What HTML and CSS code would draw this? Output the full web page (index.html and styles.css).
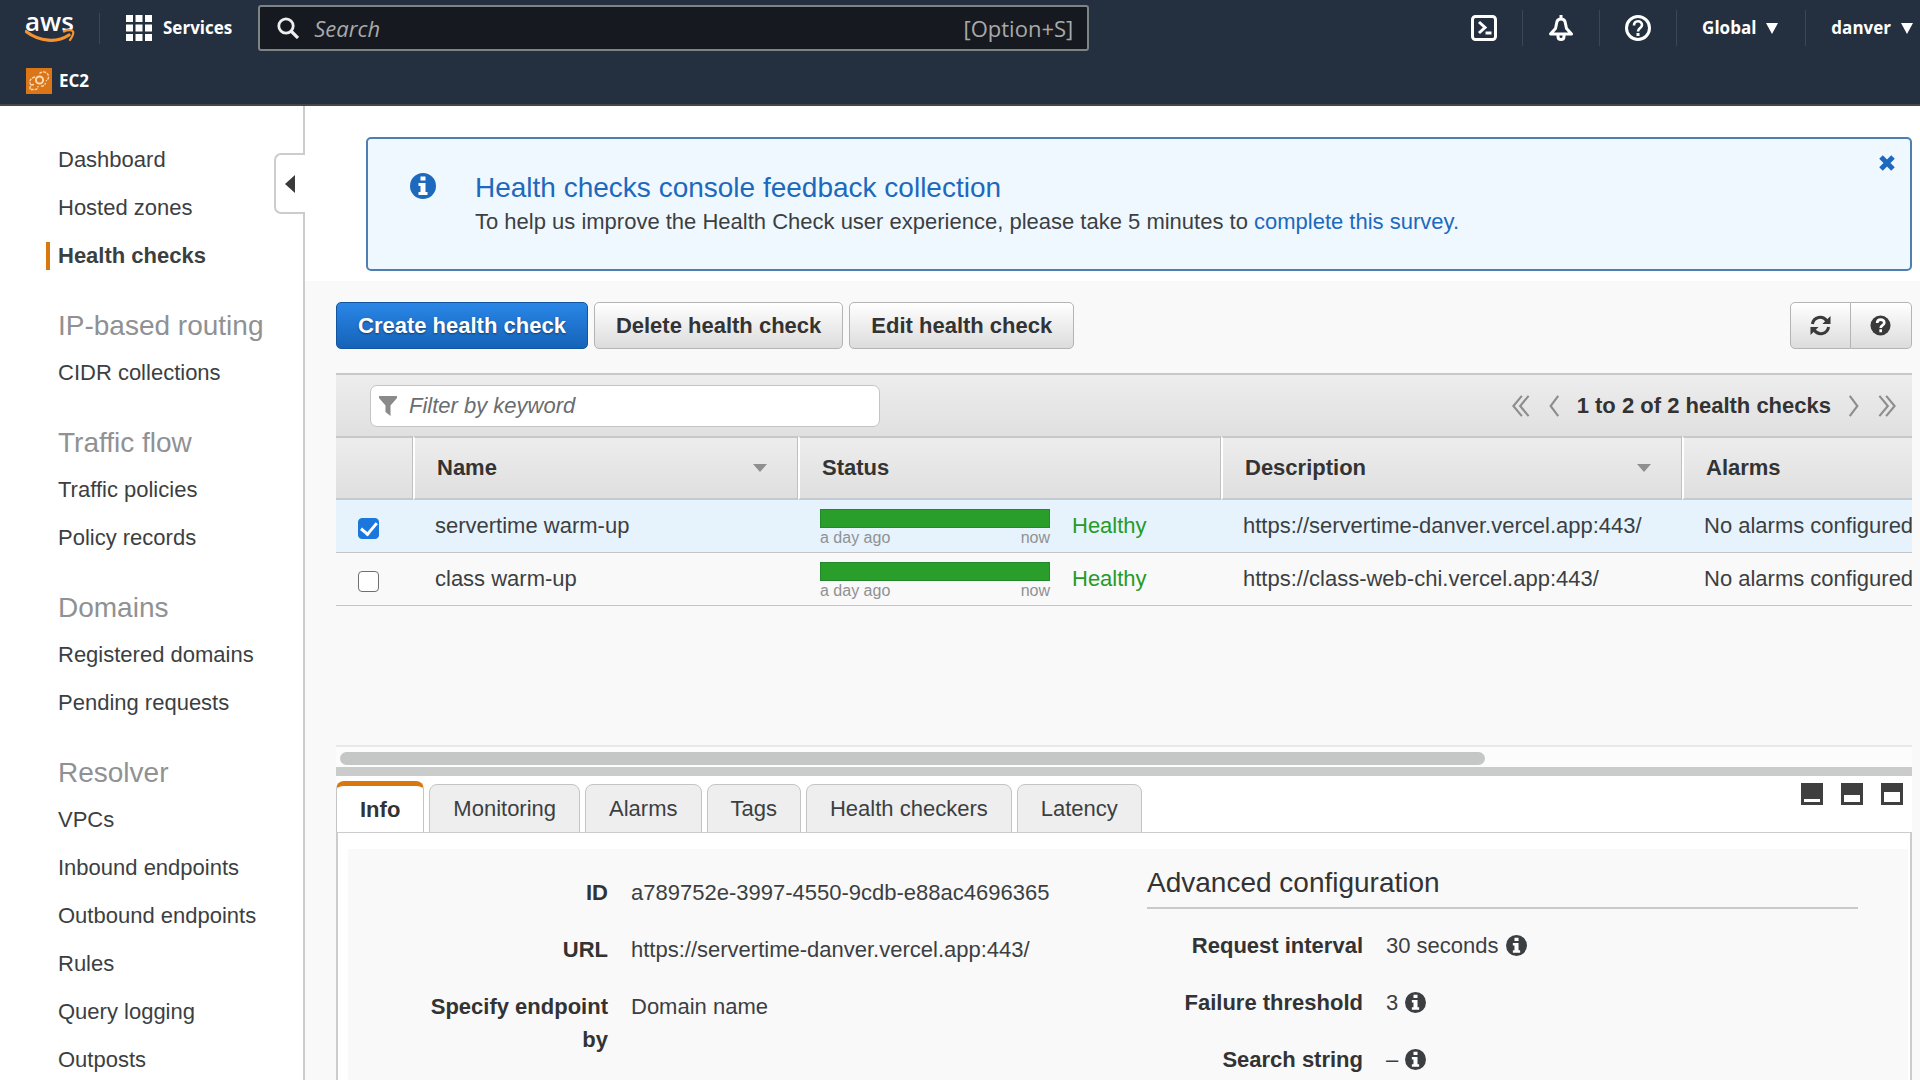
FILE: index.html
```html
<!DOCTYPE html>
<html lang="en">
<head>
<meta charset="utf-8">
<title>Route 53 Health checks</title>
<link rel="stylesheet" href="styles.css">
</head>
<body>
<svg class="sprite" aria-hidden="true">
  <symbol id="info" viewBox="0 0 26 26">
    <circle cx="13" cy="13" r="13" fill="currentColor"/>
    <path d="M10.500 3.500h5v4h-5zM8.500 10h7v9h2v3h-9v-3h2v-6h-2z" fill="#fff"/>
  </symbol>
  <symbol id="single" viewBox="0 0 14 26">
    <path d="M12 1 3 13l9 12" fill="none" stroke="#8d8d8d" stroke-width="2.500"/>
  </symbol>
  <symbol id="double" viewBox="0 0 22 26">
    <path d="M12 1 2 13l10 12M20 1 10 13l10 12" fill="none" stroke="#8d8d8d" stroke-width="2.500"/>
  </symbol>
</svg>

<header class="topbar">
  <div class="topbar-main">
    <a class="aws" href="#" aria-label="AWS home">
      <span class="aws-word">aws</span>
      <svg class="aws-smile" viewBox="0 0 50 15"><path d="M1 2.500c14 10.500 31 11.500 43 3.500" fill="none" stroke="#f59331" stroke-width="3.200" stroke-linecap="round"/><path d="M39 2.500c4-2 8-1.500 9 0s-1 6-3 8.500" fill="none" stroke="#f59331" stroke-width="2.200" stroke-linecap="round"/></svg>
    </a>
    <button class="services" type="button">
      <svg class="icon-26" viewBox="0 0 26 26"><path d="M0 0h7v7H0zM9.500 0h7v7h-7zM19 0h7v7h-7zM0 9.500h7v7H0zM9.500 9.500h7v7h-7zM19 9.500h7v7h-7zM0 19h7v7H0zM9.500 19h7v7h-7zM19 19h7v7h-7z" fill="#fff"/></svg>
      <span>Services</span>
    </button>
    <div class="search">
      <svg class="search-icon" viewBox="0 0 22 22"><circle cx="9" cy="9" r="7.200" fill="none" stroke="#eee" stroke-width="2.800"/><path d="m14 14 7 7" stroke="#eee" stroke-width="3.200"/></svg>
      <input class="search-input" type="text" placeholder="Search" aria-label="Search">
      <span class="search-key">[Option+S]</span>
    </div>
    <nav class="tools" aria-label="Account">
      <button class="tool" type="button" aria-label="CloudShell"><svg class="icon-26" viewBox="0 0 26 26" fill="none" stroke="#fff"><rect x="1.500" y="1.500" width="23" height="23" rx="3" stroke-width="3"/><path d="m8 7 6 5.500L8 18" stroke-width="3"/><path d="M14.500 18h6" stroke-width="3"/></svg></button>
      <button class="tool" type="button" aria-label="Notifications"><svg class="icon-26" viewBox="0 0 26 26" fill="none" stroke="#fff" stroke-width="3" stroke-linejoin="round"><path d="M13 0v4M2.500 19h21L18.500 13.500 17 6.500C16 3 10 3 9 6.500L7.500 13.500z"/><path d="M10 20v1.500c0 4 6 4 6 0V20"/></svg></button>
      <button class="tool" type="button" aria-label="Help"><svg class="icon-26" viewBox="0 0 26 26" fill="none" stroke="#fff"><circle cx="13" cy="13" r="11.500" stroke-width="3"/><path d="M9 10.500c0-5.500 8-5.500 8-.5 0 3-4 3-4 6.500" stroke-width="2.600"/><path d="M13 18v3" stroke-width="3"/></svg></button>
      <button class="tool tool-menu" type="button">Global <span class="caret"></span></button>
      <button class="tool tool-menu tool-user" type="button">danver <span class="caret"></span></button>
    </nav>
  </div>
  <a class="favorite" href="#">
    <svg class="icon-26" viewBox="0 0 26 26"><rect width="26" height="26" fill="#db7618"/><g fill="none" stroke="#fbd9b3"><circle cx="13.500" cy="12" r="3.600" stroke-width="2"/><path d="M13.500 5.500c3-3 8.500-1.500 9 2.500.3 2.500-1 4-2.500 5M9 9c-5 1-6.500 5-4 8M8 16.500c-3 0-4.500 2-4 5h5c2 0 3-1.500 3-3.500M15 18c2 .5 4-1 4.500-3" stroke-width="1.300" stroke-dasharray="3 1"/></g></svg>
    <span>EC2</span>
  </a>
</header>

<div class="shell">
  <aside class="sidebar">
    <button class="collapse" type="button" aria-label="Collapse navigation"><span class="collapse-arrow"></span></button>
    <nav class="nav" aria-label="Route 53">
      <div class="nav-group">
        <a class="nav-link" href="#">Dashboard</a>
        <a class="nav-link" href="#">Hosted zones</a>
        <a class="nav-link nav-current" href="#">Health checks</a>
      </div>
      <div class="nav-group">
        <h2 class="nav-title">IP-based routing</h2>
        <a class="nav-link" href="#">CIDR collections</a>
      </div>
      <div class="nav-group">
        <h2 class="nav-title">Traffic flow</h2>
        <a class="nav-link" href="#">Traffic policies</a>
        <a class="nav-link" href="#">Policy records</a>
      </div>
      <div class="nav-group">
        <h2 class="nav-title">Domains</h2>
        <a class="nav-link" href="#">Registered domains</a>
        <a class="nav-link" href="#">Pending requests</a>
      </div>
      <div class="nav-group">
        <h2 class="nav-title">Resolver</h2>
        <a class="nav-link" href="#">VPCs</a>
        <a class="nav-link" href="#">Inbound endpoints</a>
        <a class="nav-link" href="#">Outbound endpoints</a>
        <a class="nav-link" href="#">Rules</a>
        <a class="nav-link" href="#">Query logging</a>
        <a class="nav-link" href="#">Outposts</a>
      </div>
    </nav>
  </aside>

  <main class="main">
    <div class="notice-band">
      <section class="notice">
        <svg class="notice-icon icon-26"><use href="#info"/></svg>
        <div class="notice-body">
          <h1 class="notice-title">Health checks console feedback collection</h1>
          <p class="notice-text">To help us improve the Health Check user experience, please take 5 minutes to <a class="notice-link" href="#">complete this survey.</a></p>
        </div>
        <button class="notice-close" type="button" aria-label="Dismiss"><svg class="icon-16" viewBox="0 0 16 16"><path d="m2 2 12 12m0-12-12 12" stroke="#1c69bd" stroke-width="5"/></svg></button>
      </section>
    </div>

    <div class="content">
      <div class="actions">
        <button class="btn btn-primary" type="button">Create health check</button>
        <button class="btn" type="button">Delete health check</button>
        <button class="btn" type="button">Edit health check</button>
        <div class="btn-pair">
          <button class="btn btn-icon" type="button" aria-label="Refresh"><svg class="icon-21" viewBox="0 0 22 22" fill="none" stroke="#3a3a3a" stroke-width="3.200"><path d="M2.500 9.500C4 2 13 0 17.500 6M19.500 12.500C18 20 9 22 4.500 16"/><path d="M21.500 1v8.500H13zM.5 21v-8.500H9z" fill="#3a3a3a" stroke="none"/></svg></button>
          <button class="btn btn-icon" type="button" aria-label="Help"><svg class="icon-21" viewBox="0 0 22 22" fill="none"><circle cx="11" cy="11" r="10.500" fill="#3a3a3a"/><path d="M7.500 8.500c0-5 7.500-4.500 7.500-.5 0 2.500-3.800 3-3.800 5.500M11.200 15v3" stroke="#fff" stroke-width="2.800"/></svg></button>
        </div>
      </div>

      <section class="grid">
        <div class="grid-bar">
          <div class="filter">
            <svg class="filter-icon" viewBox="0 0 18 20"><path d="M0 0h18v2l-6.500 7.500V20L6.500 16V9.500L0 2z" fill="#8a8a8a"/></svg>
            <input class="filter-input" type="text" placeholder="Filter by keyword" aria-label="Filter by keyword">
          </div>
          <div class="pager">
            <button class="page-btn" type="button" aria-label="First page"><svg class="chev-double"><use href="#double"/></svg></button>
            <button class="page-btn" type="button" aria-label="Previous page"><svg class="chev"><use href="#single"/></svg></button>
            <span class="pager-text">1 to 2 of 2 health checks</span>
            <button class="page-btn page-next" type="button" aria-label="Next page"><svg class="chev"><use href="#single"/></svg></button>
            <button class="page-btn page-next" type="button" aria-label="Last page"><svg class="chev-double"><use href="#double"/></svg></button>
          </div>
        </div>
        <table class="table">
          <colgroup><col class="col-check"><col class="col-name"><col class="col-status"><col class="col-desc"><col></colgroup>
          <thead>
            <tr>
              <th><span class="hidden">Select</span></th>
              <th><div class="th-inner">Name <span class="sort"></span></div></th>
              <th>Status</th>
              <th><div class="th-inner">Description <span class="sort"></span></div></th>
              <th>Alarms</th>
            </tr>
          </thead>
          <tbody>
            <tr class="selected">
              <td class="cell-check"><input class="check" type="checkbox" aria-label="servertime warm-up" checked></td>
              <td>servertime warm-up</td>
              <td><div class="status"><div class="history"><div class="history-bar"></div><div class="history-scale"><span>a day ago</span><span>now</span></div></div><span class="healthy">Healthy</span></div></td>
              <td>https://servertime-danver.vercel.app:443/</td>
              <td>No alarms configured</td>
            </tr>
            <tr>
              <td class="cell-check"><input class="check" type="checkbox" aria-label="class warm-up"></td>
              <td>class warm-up</td>
              <td><div class="status"><div class="history"><div class="history-bar"></div><div class="history-scale"><span>a day ago</span><span>now</span></div></div><span class="healthy">Healthy</span></div></td>
              <td>https://class-web-chi.vercel.app:443/</td>
              <td>No alarms configured</td>
            </tr>
          </tbody>
        </table>
      </section>
      <div class="scroll-track"><div class="scroll-thumb"></div></div>
      <div class="splitter"></div>

      <section class="details">
        <div class="tab-row">
          <div class="tabs" role="tablist">
            <button class="tab tab-active" type="button" role="tab" aria-selected="true">Info</button>
            <button class="tab" type="button" role="tab">Monitoring</button>
            <button class="tab" type="button" role="tab">Alarms</button>
            <button class="tab" type="button" role="tab">Tags</button>
            <button class="tab" type="button" role="tab">Health checkers</button>
            <button class="tab" type="button" role="tab">Latency</button>
          </div>
          <div class="layouts">
            <button class="layout-btn" type="button" aria-label="Small pane"><svg class="icon-22" viewBox="0 0 22 22"><path d="M0 0h22v22H0z" fill="#3f3f3f"/><path d="M3 16h16v3H3z" fill="#fff"/></svg></button>
            <button class="layout-btn" type="button" aria-label="Half pane"><svg class="icon-22" viewBox="0 0 22 22"><path d="M0 0h22v22H0z" fill="#3f3f3f"/><path d="M3 12h16v7H3z" fill="#fff"/></svg></button>
            <button class="layout-btn" type="button" aria-label="Full pane"><svg class="icon-22" viewBox="0 0 22 22"><path d="M0 0h22v22H0z" fill="#3f3f3f"/><path d="M3 9h16v10H3z" fill="#fff"/></svg></button>
          </div>
        </div>
        <div class="panel">
          <div class="panel-body">
            <dl class="props">
              <dt>ID</dt><dd>a789752e-3997-4550-9cdb-e88ac4696365</dd>
              <dt>URL</dt><dd>https://servertime-danver.vercel.app:443/</dd>
              <dt>Specify endpoint by</dt><dd>Domain name</dd>
            </dl>
            <div class="advanced">
              <h2 class="advanced-title">Advanced configuration</h2>
              <dl class="props props-advanced">
                <dt>Request interval</dt><dd>30 seconds <svg class="info-icon"><use href="#info"/></svg></dd>
                <dt>Failure threshold</dt><dd>3 <svg class="info-icon"><use href="#info"/></svg></dd>
                <dt>Search string</dt><dd>– <svg class="info-icon"><use href="#info"/></svg></dd>
              </dl>
            </div>
          </div>
        </div>
      </section>
    </div>
  </main>
</div>
</body>
</html>
```
FILE: styles.css
```css
* { box-sizing: border-box; }

body {
  margin: 0;
  min-height: 100vh;
  display: flex;
  flex-direction: column;
  background: #fff;
  color: #3c3f42;
  font: 22px/28px "Liberation Sans", Arial, sans-serif;
}

button, input { font: inherit; color: inherit; }
button { padding: 0; border: 0; background: none; cursor: pointer; }
a { color: inherit; text-decoration: none; }
h1, h2, p, dl, dd { margin: 0; font-weight: 400; }
svg { display: block; flex: none; }

.sprite { display: none; }
.hidden { visibility: hidden; }
.icon-16 { width: 16px; height: 16px; }
.icon-21 { width: 21px; height: 21px; }
.icon-22 { width: 22px; height: 22px; }
.icon-26 { width: 26px; height: 26px; }

/* Top bar */
.topbar {
  height: 106px;
  background: #243040;
  border-bottom: 2px solid #45484a;
  color: #fff;
  font: 700 17px/24px "Open Sans", "Noto Sans", sans-serif;
}
.topbar-main { display: flex; align-items: center; height: 56px; padding-left: 25px; }
.aws { display: flex; flex-direction: column; width: 75px; height: 31px; border-right: 1px solid #3c4755; }
.aws-word { font-size: 26px; line-height: 16px; font-weight: 600; }
.aws-smile { width: 50px; height: 15px; }
.services { display: flex; align-items: center; gap: 11px; margin: 0 26px; }
.search {
  flex: 0 1 831px;
  display: flex;
  align-items: center;
  height: 46px;
  padding: 0 14px 0 17px;
  background: #16191f;
  border: 2px solid #7d8486;
  border-radius: 3px;
  color: #a9a9a9;
  font-size: 22px;
  font-weight: 400;
}
.search-icon { width: 22px; height: 22px; }
.search-input { flex: 1; min-width: 0; margin-left: 13px; border: 0; background: none; outline: 0; }
.search-input::placeholder { color: #a9a9a9; font-style: italic; opacity: 1; }
.tools { display: flex; align-items: center; margin-left: auto; }
.tool {
  display: flex;
  align-items: center;
  justify-content: center;
  width: 77px;
  height: 36px;
  border-left: 1px solid #3c4755;
}
.tool:first-child { border-left: 0; }
.tool-menu { width: auto; gap: 10px; padding: 0 27px 0 25px; }
.tool-user { padding-right: 7px; }
.caret { border: 6px solid transparent; border-top: 11px solid #fff; border-bottom: 0; }
.favorite { display: inline-flex; align-items: center; gap: 7px; height: 50px; padding-left: 26px; }

/* Shell */
.shell { flex: 1; display: flex; }
.sidebar {
  position: relative;
  flex: 0 0 305px;
  padding: 40px 0 0 46px;
  border-right: 2px solid #ccc;
  background: #fff;
}
.nav { display: flex; flex-direction: column; gap: 42px; }
.nav-group { display: flex; flex-direction: column; gap: 20px; }
.nav-link { padding-left: 8px; border-left: 4px solid transparent; }
.nav-current { font-weight: 700; border-color: #d97710; }
.nav-title { margin-bottom: -1px; padding-left: 12px; color: #8f9193; font-size: 28px; line-height: 28px; }
.collapse {
  position: absolute;
  top: 47px;
  right: -2px;
  width: 31px;
  height: 61px;
  padding-left: 9px;
  background: #fff;
  border: 2px solid #ccc;
  border-right: 0;
  border-radius: 7px 0 0 7px;
}
.collapse-arrow { display: block; width: 10px; border: 9px solid transparent; border-right: 10px solid #3a3a3a; border-left: 0; }

/* Main column */
.main { flex: 1; min-width: 0; display: flex; flex-direction: column; background: #f9f9f9; }
.notice-band { padding: 31px 8px 10px 61px; background: #fff; }
.notice {
  display: flex;
  height: 134px;
  padding: 32px 15px 0 42px;
  background: #f0f8ff;
  border: 2px solid #4f7fb2;
  border-radius: 5px;
}
.notice-icon { margin-top: 2px; color: #1c69bd; }
.notice-body { flex: 1; margin-left: 39px; }
.notice-title { margin-bottom: 3px; color: #1c69bd; font-size: 28px; line-height: 34px; }
.notice-link { color: #1c69bd; }
.notice-close { align-self: flex-start; margin-top: -16px; }

.content { flex: 1; display: flex; flex-direction: column; padding: 21px 8px 0 31px; }
.actions { display: flex; gap: 6px; margin-bottom: 24px; }
.btn {
  height: 47px;
  padding: 0 21px;
  background: linear-gradient(#fff, #dcdcdc);
  border: 1px solid #b4b4b4;
  border-radius: 5px;
  color: #333;
  font-weight: 700;
}
.btn-primary {
  background: linear-gradient(#2a86e6, #1563b8);
  border-color: #12549f;
  color: #fff;
  text-shadow: 0 1px 2px #123d70;
}
.btn-pair { display: flex; margin-left: auto; }
.btn-icon { width: 61px; padding: 0 19px; border-radius: 5px 0 0 5px; }
.btn-icon + .btn-icon { border-left: 0; border-radius: 0 5px 5px 0; }

/* Health check grid */
.grid { min-height: 372px; overflow: hidden; }
.grid-bar {
  display: flex;
  align-items: center;
  justify-content: space-between;
  height: 63px;
  padding: 0 15px 0 34px;
  background: linear-gradient(#ededed, #e0e0e0);
  border-top: 2px solid #c8c8c8;
}
.filter {
  display: flex;
  align-items: center;
  gap: 10px;
  flex: 0 1 510px;
  height: 42px;
  padding: 0 8px;
  background: #fff;
  border: 1px solid #c4c4c4;
  border-radius: 7px;
}
.filter-icon { width: 18px; height: 20px; }
.filter-input { flex: 1; min-width: 0; border: 0; outline: 0; background: none; }
.filter-input::placeholder { color: #6a6d70; font-style: italic; opacity: 1; }
.pager { display: flex; align-items: center; gap: 17px; }
.pager-text { color: #333; font-weight: 700; }
.page-next { transform: scaleX(-1); }
.chev { width: 12px; height: 22px; }
.chev-double { width: 20px; height: 22px; }

.table { width: 100%; table-layout: fixed; border-collapse: separate; border-spacing: 0; white-space: nowrap; }
.col-check { width: 77px; }
.col-name { width: 385px; }
.col-status { width: 423px; }
.col-desc { width: 461px; }
.table th {
  height: 64px;
  padding: 0 0 0 22px;
  background: linear-gradient(#ededed, #dfdfdf);
  border-top: 2px solid #c8c8c8;
  border-bottom: 2px solid #c4cbd0;
  border-left: 2px solid #fff;
  box-shadow: -1px 0 #c0c0c0;
  color: #333;
  text-align: left;
}
.table th:first-child { border-left: 0; box-shadow: none; }
.th-inner { display: flex; align-items: center; justify-content: space-between; padding-right: 31px; }
.sort { border: 7px solid transparent; border-top: 8px solid #8f8f8f; border-bottom: 0; }
.table td { height: 53px; padding: 0 0 0 22px; border-bottom: 1px solid #c4c4c4; }
.selected td { background: #e6f3fd; }
.table .cell-check { padding-top: 4px; }
.check { appearance: none; display: block; width: 21px; height: 21px; margin: 0; border: 1px solid #6f6f6f; border-radius: 4px; background: #fff; }
.check:checked {
  border-color: #1b77dc;
  background: #1b77dc;
  display: grid;
  place-items: center;
}
.check:checked::after { content: ""; width: 7px; height: 13px; margin-bottom: 3px; border: solid #fff; border-width: 0 3px 3px 0; transform: rotate(40deg); }
.status { display: flex; align-items: center; gap: 22px; }
.history { width: 230px; padding-top: 4px; }
.history-bar { height: 19px; background: #2a9e2b; border: 1px solid #23882a; }
.history-scale { display: flex; justify-content: space-between; color: #8f9193; font-size: 16px; line-height: 20px; }
.healthy { color: #259b27; }

.scroll-track { height: 22px; padding: 5px 4px; border-top: 2px solid #e8e8e8; background: #fcfcfc; }
.scroll-thumb { width: 73%; height: 13px; border-radius: 7px; background: #c5c6c6; }
.splitter { height: 9px; background: #cacbcb; }

/* Detail pane */
.details { flex: 1; display: flex; flex-direction: column; background: #fff; }
.tab-row { display: flex; justify-content: space-between; padding: 5px 9px 0 0; }
.tabs { display: flex; align-items: flex-end; gap: 5px; margin-bottom: -1px; }
.tab { height: 49px; padding: 1px 23px 0; background: #eee; border: 1px solid #c4c4c4; border-radius: 8px 8px 0 0; }
.tab-active { height: 52px; background: #fff; border-top: 5px solid #d97710; border-bottom-color: #fff; color: #333; font-weight: 700; }
.layouts { display: flex; align-items: flex-start; gap: 18px; padding-top: 2px; }
.panel { flex: 1; display: flex; padding: 16px 2px 0 10px; border: 2px solid #ccc; border-top-width: 1px; border-bottom: 0; }
.panel-body { flex: 1; display: grid; grid-template-columns: 799px 1fr; padding-right: 50px; background: #f9f9f9; }
.props { display: grid; grid-template-columns: 260px 1fr; column-gap: 23px; row-gap: 24px; align-content: start; padding-top: 27px; line-height: 33px; }
.props dt { padding-left: 60px; color: #333; font-weight: 700; text-align: right; }
.advanced-title { padding: 15px 0 5px; border-bottom: 2px solid #c9c9c9; color: #333; font-size: 28px; line-height: 38px; }
.props-advanced { grid-template-columns: 216px 1fr; padding-top: 20px; }
.props-advanced dt { padding-left: 0; }
.props-advanced dd { display: flex; align-items: center; gap: 7px; }
.info-icon { width: 21px; height: 21px; }
```
